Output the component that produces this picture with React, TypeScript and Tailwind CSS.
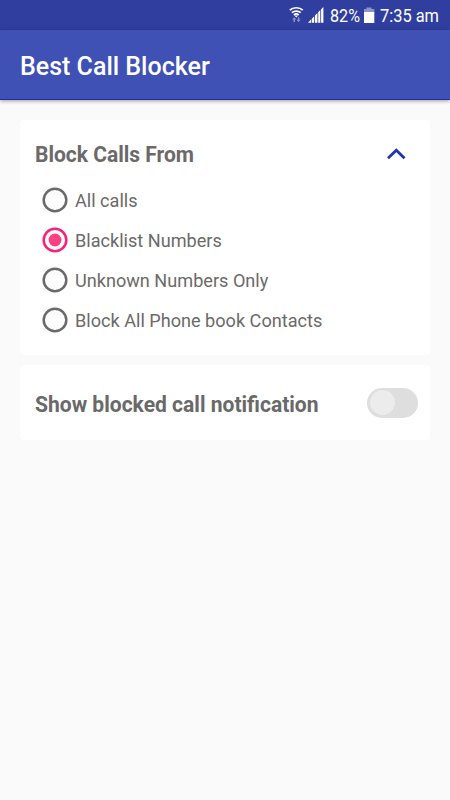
const options = [
  "All calls",
  "Blacklist Numbers",
  "Unknown Numbers Only",
  "Block All Phone book Contacts",
];

function Radio({ checked }: { checked: boolean }) {
  return (
    <svg className="shrink-0" width="26" height="26" viewBox="0 0 26 26" fill="none">
      <circle cx="13" cy="13" r="11.3" stroke={checked ? "#ff1f76" : "#6a6a6a"} strokeWidth="2.5" />
      {checked && <circle cx="13" cy="13" r="6.4" fill="#ff4081" />}
    </svg>
  );
}

function StatusBar() {
  return (
    <div className="flex h-[30px] items-center bg-[#303f9f] pl-[288px] text-[19px] leading-[30px] whitespace-nowrap text-white">
      <svg className="mr-[3px] shrink-0" width="17" height="30" viewBox="0 0 17 30" fill="none">
        <path d="M1.8 10.2C5.1 6.9 11.5 6.9 14.8 10.2M3.9 12.7C6.3 10.5 10.3 10.5 12.7 12.7M5.9 15C7.3 13.8 9.3 13.8 10.7 15" stroke="#fff" strokeWidth="1.7" />
        <path d="M6.6 15.5h3.4l-1.7 2z" fill="#fff" />
        <path d="M6.3 17.2 8.3 19.4H7v2.5H5.5v-2.5H4.2zM10.6 22l2.1-2.3h-1.4v-2.4H9.9v2.4H8.5z" fill="#8c95ca" />
      </svg>
      <svg className="shrink-0" width="22" height="30" viewBox="308 0 22 30" fill="#fff">
        <path d="M308 22.7 311 19.6v3.1zM311.7 18.9l2.5-2.6v6.4h-2.5zM315 15.5l2.4-2.5v9.7H315zM318.2 12.2l2.1-2.2v12.7h-2.1zM321.1 9.2l2.3-2.3v15.8h-2.3z" />
      </svg>
      <span className="w-[34px] origin-left translate-y-px scale-x-[.85]">82%</span>
      <svg className="shrink-0" width="16" height="30" viewBox="364 0 16 30">
        <path d="M366.5 7.5h5V9h2.8v4h-10.3V9h2.5z" fill="#8c95ca" />
        <path d="M364 12h10.3v11h-10.3z" fill="#fff" />
      </svg>
      <span className="w-[60px] origin-left translate-y-px scale-x-[.863]">7:35 am</span>
    </div>
  );
}

export default function App() {
  return (
    <main className="h-[800px] w-[450px] overflow-hidden bg-[#fafafa] font-['Roboto',sans-serif] text-[#6c6969]">
      <StatusBar />
      <header className="flex h-[70px] items-center border-b border-[#1b32b0] bg-[#3f51b5] pt-[4px] pl-5 text-[25px] font-medium text-white shadow-[0_1px_4px_rgba(0,0,0,0.38)]">
        <h1>Best Call Blocker</h1>
      </header>
      <div className="flex flex-col gap-[10px] px-5 pt-5">
        <section className="h-[235px] rounded-[4px] bg-white pt-[15px] pl-[15px]">
          <div className="flex h-[40px] items-center justify-between pr-[24px]">
            <h2 className="origin-left -translate-y-px scale-x-[.955] text-[22px] font-bold">Block Calls From</h2>
            <svg className="-translate-y-px" width="20" height="14" viewBox="0 0 20 14" fill="none">
              <path d="M2 11.2 10.3 3.2 18.5 11.2" stroke="#2034b8" strokeWidth="2.8" />
            </svg>
          </div>
          <div className="mt-[5px] pl-[7px]">
            {options.map((label, i) => (
              <label key={label} className="flex h-10 items-center gap-[7px] text-[18.75px]">
                <Radio checked={i === 1} />
                <span className="origin-left translate-y-px scale-x-[.966]">{label}</span>
              </label>
            ))}
          </div>
        </section>
        <section className="flex h-[75px] items-center justify-between rounded-[4px] bg-white pr-[12px] pl-[15px]">
          <h2 className="origin-left translate-y-[2px] scale-x-[.957] text-[22px] font-bold text-[#696969]">Show blocked call notification</h2>
          <span className="flex h-[30px] w-[51px] items-center rounded-full bg-[#dedede] pl-[2.5px]">
            <span className="size-[25px] rounded-full bg-[#ececec]" />
          </span>
        </section>
      </div>
    </main>
  );
}
